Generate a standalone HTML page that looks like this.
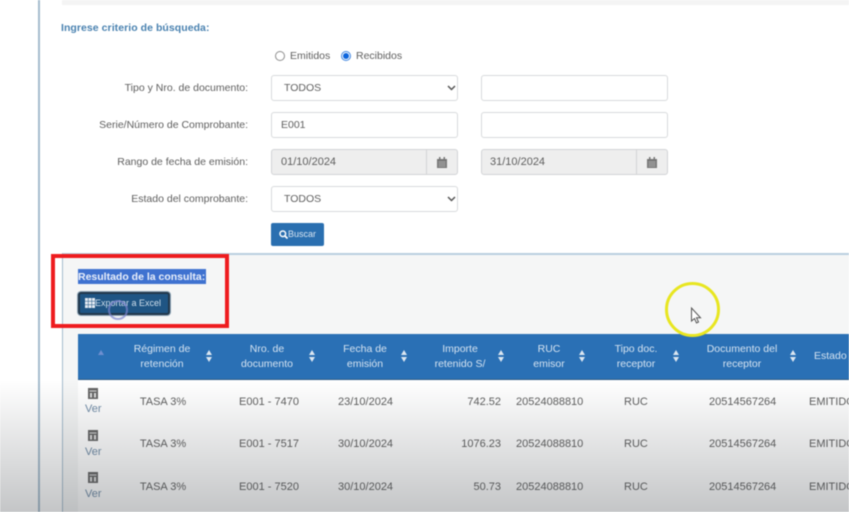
<!DOCTYPE html>
<html lang="es">
<head>
<meta charset="utf-8">
<title>Consulta</title>
<style>
html,body{margin:0;padding:0;background:#fff}
body{width:849px;height:512px;overflow:hidden;position:relative;font-family:"Liberation Sans",sans-serif;font-size:11px;color:#5e5e5e}
#p{position:absolute;left:0;top:0;width:849px;height:512px;overflow:hidden;background:#fff;filter:blur(.5px)}
#p div,#p svg{position:absolute}
.t{white-space:nowrap;line-height:14px}
.l{font-size:10.5px}
.r{text-align:right}
.c{text-align:center}
.box{box-sizing:border-box;border:1px solid #d8dadc;border-radius:3px;background:#fff;height:26px}
.dis{background:#eee;border-color:#d2d4d6}
.h{color:#d5e3f1;text-align:center;line-height:15px;white-space:nowrap;font-size:10.5px}
</style>
</head>
<body>
<div id="p">
  <!-- panel lines -->
  <div style="left:38px;top:0;width:2px;height:512px;background:#a5bccd"></div>
  <div style="left:62px;top:0;width:787px;height:5px;background:#f4f4f4"></div>

  <div class="t" style="left:61px;top:21px;font-weight:bold;font-size:10.5px;letter-spacing:.05px;color:#4a82b0">Ingrese criterio de búsqueda:</div>

  <!-- radios -->
  <div style="left:275px;top:51px;width:8px;height:8px;border:1px solid #8d8d8d;border-radius:50%;background:#fff"></div>
  <div class="t" style="left:290px;top:49px;font-size:10.5px">Emitidos</div>
  <div style="left:341px;top:51px;width:8px;height:8px;border:1px solid #3d84e0;border-radius:50%;background:#fff"></div>
  <div style="left:343px;top:53px;width:6px;height:6px;border-radius:50%;background:#0d65dd"></div>
  <div class="t" style="left:356px;top:49px;font-size:10.5px">Recibidos</div>

  <!-- labels -->
  <div class="t r l" style="left:60px;width:188px;top:81px">Tipo y Nro. de documento:</div>
  <div class="t r l" style="left:60px;width:188px;top:118px">Serie/Número de Comprobante:</div>
  <div class="t r l" style="left:60px;width:188px;top:155px">Rango de fecha de emisión:</div>
  <div class="t r l" style="left:60px;width:188px;top:192px">Estado del comprobante:</div>

  <!-- row 1 -->
  <div class="box" style="left:271px;top:75px;width:187px"></div>
  <div class="t l" style="left:284px;top:81px">TODOS</div>
  <svg style="left:447px;top:85px" width="9" height="6" viewBox="0 0 9 6"><path d="M1 1l3.5 3.500L8 1" fill="none" stroke="#555" stroke-width="1.500"/></svg>
  <div class="box" style="left:481px;top:75px;width:187px"></div>

  <!-- row 2 -->
  <div class="box" style="left:271px;top:112px;width:187px"></div>
  <div class="t l" style="left:281px;top:118px">E001</div>
  <div class="box" style="left:481px;top:112px;width:187px"></div>

  <!-- row 3 -->
  <div class="box dis" style="left:271px;top:149px;width:187px"></div>
  <div style="left:426px;top:150px;width:1px;height:24px;background:#d2d4d6"></div>
  <div class="t" style="left:281px;top:155px">01/10/2024</div>
  <svg style="left:437px;top:157px" width="10" height="11" viewBox="0 0 10 11"><path d="M0 2h10v9H0z" fill="#777"/><path d="M2 0h1.500v2.500H2zM6.500 0H8v2.500H6.500z" fill="#777"/><path d="M1 5h8M1 7h8M1 9h8M3 4v6M5 4v6M7 4v6" stroke="#b5b5b5" stroke-width=".5"/></svg>
  <div class="box dis" style="left:481px;top:149px;width:187px"></div>
  <div style="left:636px;top:150px;width:1px;height:24px;background:#d2d4d6"></div>
  <div class="t" style="left:490px;top:155px">31/10/2024</div>
  <svg style="left:647px;top:157px" width="10" height="11" viewBox="0 0 10 11"><path d="M0 2h10v9H0z" fill="#777"/><path d="M2 0h1.500v2.500H2zM6.500 0H8v2.500H6.500z" fill="#777"/><path d="M1 5h8M1 7h8M1 9h8M3 4v6M5 4v6M7 4v6" stroke="#b5b5b5" stroke-width=".5"/></svg>

  <!-- row 4 -->
  <div class="box" style="left:271px;top:186px;width:187px"></div>
  <div class="t l" style="left:284px;top:192px">TODOS</div>
  <svg style="left:447px;top:196px" width="9" height="6" viewBox="0 0 9 6"><path d="M1 1l3.500 3.500L8 1" fill="none" stroke="#555" stroke-width="1.500"/></svg>

  <!-- Buscar -->
  <div style="left:271px;top:223px;width:53px;height:23px;background:#2a6fb0;border-radius:2px"></div>
  <svg style="left:279px;top:230px" width="9" height="9" viewBox="0 0 9 9"><circle cx="3.800" cy="3.800" r="2.800" fill="none" stroke="#fff" stroke-width="1.500"/><path d="M6 6l2.500 2.500" stroke="#fff" stroke-width="1.700"/></svg>
  <div class="t" style="left:288px;top:227px;font-size:9px;color:#d8e5f2">Buscar</div>

  <!-- results panel -->
  <div style="left:62px;top:253px;width:787px;height:259px;background:#f5f6f6;border-top:2px solid #b9cfe0;box-sizing:border-box"></div>
  <div style="left:62px;top:253px;width:1px;height:259px;background:#a5bccd"></div>

  <div style="left:78px;top:269px;width:128px;height:15px;background:#3f72d0"></div>
  <div class="t" style="left:78px;top:270px;font-weight:bold;font-size:10.5px;color:#e9effa">Resultado de la consulta:</div>

  <!-- export button -->
  <div style="left:78px;top:292px;width:92px;height:23px;box-sizing:border-box;background:#1f5584;border:2px solid #22384b;border-radius:3px;box-shadow:0 0 0 1px #8da4b6"></div>
  <svg style="left:85px;top:298px" width="10" height="10" viewBox="0 0 10 10"><path d="M0 0h3v3H0zM3.500 0h3v3h-3zM7 0h3v3H7zM0 3.500h3v3H0zM3.500 3.500h3v3h-3zM7 3.500h3v3H7zM0 7h3v3H0zM3.500 7h3v3h-3zM7 7h3v3H7z" fill="#e4ebf2"/></svg>
  <div class="t" style="left:95px;top:296px;font-size:9px;color:#cfdfec">Exportar a Excel</div>
  <div style="left:108px;top:300px;width:20px;height:20px;box-sizing:border-box;border:2px solid #7d86cf;border-radius:50%;opacity:.7"></div>

  <!-- table rows background -->
  <div style="left:78px;top:380px;width:771px;height:132px;background:#fff"></div>

  <!-- table header -->
  <div style="left:78px;top:334px;width:771px;height:46px;background:#2a70b5;border-bottom:1px solid #2d5a84;box-sizing:border-box"></div>
  <svg style="left:98px;top:350px" width="6" height="5" viewBox="0 0 6 5"><path d="M3 0l3 5H0z" fill="#6f8fd0"/></svg>

  <div class="h" style="left:112px;width:100px;top:342px">Régimen de<br>retención</div>
  <div class="h" style="left:217px;width:100px;top:342px">Nro. de<br>documento</div>
  <div class="h" style="left:315px;width:100px;top:342px">Fecha de<br>emisión</div>
  <div class="h" style="left:410px;width:100px;top:342px">Importe<br>retenido S/</div>
  <div class="h" style="left:499px;width:100px;top:342px">RUC<br>emisor</div>
  <div class="h" style="left:586px;width:100px;top:342px">Tipo doc.<br>receptor</div>
  <div class="h" style="left:692px;width:100px;top:342px">Documento del<br>receptor</div>
  <div class="h" style="left:814px;top:349px">Estado</div>

  <svg style="left:206px;top:350px" width="6" height="12" viewBox="0 0 6 12"><path d="M3 0l3 5H0zM3 12L0 7h6z" fill="#dbe6f1"/></svg>
  <svg style="left:309px;top:350px" width="6" height="12" viewBox="0 0 6 12"><path d="M3 0l3 5H0zM3 12L0 7h6z" fill="#dbe6f1"/></svg>
  <svg style="left:401px;top:350px" width="6" height="12" viewBox="0 0 6 12"><path d="M3 0l3 5H0zM3 12L0 7h6z" fill="#dbe6f1"/></svg>
  <svg style="left:498px;top:350px" width="6" height="12" viewBox="0 0 6 12"><path d="M3 0l3 5H0zM3 12L0 7h6z" fill="#dbe6f1"/></svg>
  <svg style="left:579px;top:350px" width="6" height="12" viewBox="0 0 6 12"><path d="M3 0l3 5H0zM3 12L0 7h6z" fill="#dbe6f1"/></svg>
  <svg style="left:673px;top:350px" width="6" height="12" viewBox="0 0 6 12"><path d="M3 0l3 5H0zM3 12L0 7h6z" fill="#dbe6f1"/></svg>
  <svg style="left:790px;top:350px" width="6" height="12" viewBox="0 0 6 12"><path d="M3 0l3 5H0zM3 12L0 7h6z" fill="#dbe6f1"/></svg>

  <!-- row 1 -->
  <svg style="left:88px;top:388px" width="10" height="11" viewBox="0 0 10 11"><path d="M0 0h10v11H0z" fill="#666"/><path d="M1.500 2.500h7v1h-7zM2 5h2v4.500H2zM6 5h2v4.500H6z" fill="#dcdcdc"/></svg>
  <div class="t" style="left:85px;top:402px;font-size:11px;color:#6f8ba6">Ver</div>
  <div class="t c" style="left:113px;width:100px;top:395px">TASA 3%</div>
  <div class="t" style="left:239px;top:395px">E001 - 7470</div>
  <div class="t" style="left:338px;top:395px">23/10/2024</div>
  <div class="t r" style="left:420px;width:81px;top:395px">742.52</div>
  <div class="t" style="left:516px;top:395px">20524088810</div>
  <div class="t" style="left:624px;top:395px">RUC</div>
  <div class="t" style="left:709px;top:395px">20514567264</div>
  <div class="t" style="left:809px;top:395px">EMITIDO</div>

  <!-- row 2 -->
  <svg style="left:88px;top:430px" width="10" height="11" viewBox="0 0 10 11"><path d="M0 0h10v11H0z" fill="#666"/><path d="M1.500 2.500h7v1h-7zM2 5h2v4.500H2zM6 5h2v4.500H6z" fill="#dcdcdc"/></svg>
  <div class="t" style="left:85px;top:445px;font-size:11px;color:#6f8ba6">Ver</div>
  <div class="t c" style="left:113px;width:100px;top:437px">TASA 3%</div>
  <div class="t" style="left:239px;top:437px">E001 - 7517</div>
  <div class="t" style="left:338px;top:437px">30/10/2024</div>
  <div class="t r" style="left:420px;width:81px;top:437px">1076.23</div>
  <div class="t" style="left:516px;top:437px">20524088810</div>
  <div class="t" style="left:624px;top:437px">RUC</div>
  <div class="t" style="left:709px;top:437px">20514567264</div>
  <div class="t" style="left:809px;top:437px">EMITIDO</div>

  <!-- row 3 -->
  <svg style="left:88px;top:472px" width="10" height="11" viewBox="0 0 10 11"><path d="M0 0h10v11H0z" fill="#666"/><path d="M1.500 2.500h7v1h-7zM2 5h2v4.500H2zM6 5h2v4.500H6z" fill="#dcdcdc"/></svg>
  <div class="t" style="left:85px;top:487px;font-size:11px;color:#6f8ba6">Ver</div>
  <div class="t c" style="left:113px;width:100px;top:480px">TASA 3%</div>
  <div class="t" style="left:239px;top:480px">E001 - 7520</div>
  <div class="t" style="left:338px;top:480px">30/10/2024</div>
  <div class="t r" style="left:420px;width:81px;top:480px">50.73</div>
  <div class="t" style="left:516px;top:480px">20524088810</div>
  <div class="t" style="left:624px;top:480px">RUC</div>
  <div class="t" style="left:709px;top:480px">20514567264</div>
  <div class="t" style="left:809px;top:480px">EMITIDO</div>

  <!-- bottom shadow gradient -->
  <div style="left:0;top:380px;width:849px;height:132px;background:linear-gradient(to bottom,rgba(60,65,70,0),rgba(60,65,70,.3))"></div>

  <!-- red highlight -->
  <div style="left:51px;top:254px;width:178px;height:74px;box-sizing:border-box;border:4px solid #ee1c1f"></div>

  <!-- cursor circle -->
  <div style="left:665px;top:282px;width:55px;height:55px;box-sizing:border-box;border:3px solid #e8e620;border-radius:50%"></div>
  <svg style="left:690px;top:307px" width="12" height="18" viewBox="0 0 12 18"><path d="M1.500 1v13l3-2.500 2 4.500 2-1-2-4.200h4z" fill="#fff" stroke="#555" stroke-width="1"/></svg>
</div>
</body>
</html>
